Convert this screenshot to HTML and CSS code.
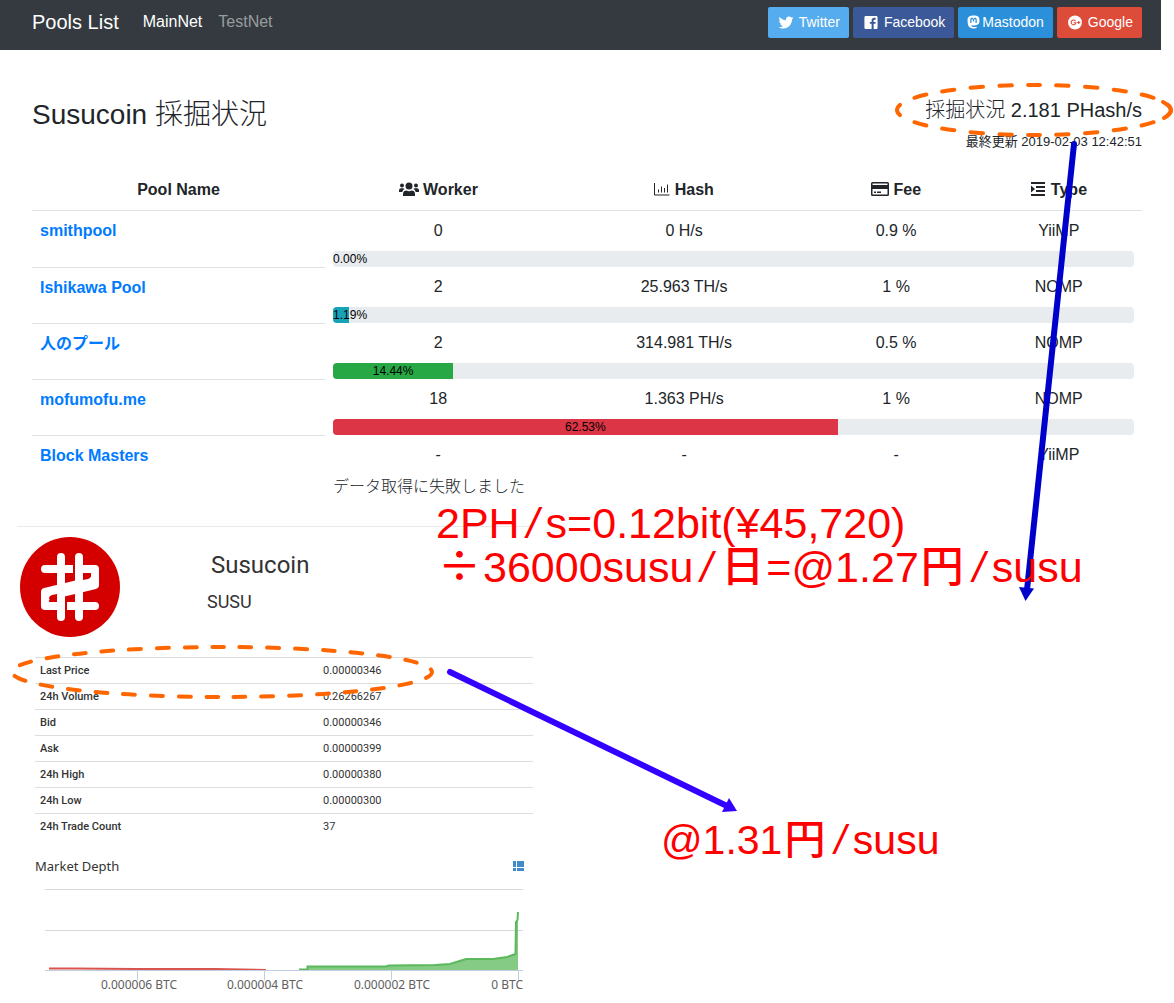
FILE: index.html
```html
<!DOCTYPE html>
<html lang="ja">
<head>
<meta charset="utf-8">
<title>Pools List</title>
<link rel="stylesheet" href="styles.css">
</head>
<body>
<div class="page">
  <header class="navbar">
    <a class="brand" href="#">Pools List</a>
    <nav class="links">
      <a class="link active" href="#">MainNet</a>
      <a class="link" href="#">TestNet</a>
    </nav>
    <div class="share">
      <button class="btn twitter" type="button"><svg class="icon wide" viewBox="0 0 512 512"><path d="M459.37 151.716c.325 4.548.325 9.097.325 13.645 0 138.72-105.583 298.558-298.558 298.558-59.452 0-114.68-17.219-161.137-47.106 8.447.974 16.568 1.299 25.34 1.299 49.055 0 94.213-16.568 130.274-44.832-46.132-.975-84.792-31.188-98.112-72.772 6.498.974 12.995 1.624 19.818 1.624 9.421 0 18.843-1.3 27.614-3.573-48.081-9.747-84.143-51.98-84.143-102.985v-1.299c13.969 7.797 30.214 12.67 47.431 13.319-28.264-18.843-46.781-51.005-46.781-87.391 0-19.492 5.197-37.36 14.294-52.954 51.655 63.675 129.3 105.258 216.365 109.807-1.624-7.797-2.599-15.918-2.599-24.04 0-57.828 46.782-104.934 104.934-104.934 30.213 0 57.502 12.67 76.67 33.137 23.715-4.548 46.456-13.32 66.599-25.34-7.798 24.366-24.366 44.833-46.132 57.827 21.117-2.273 41.584-8.122 60.426-16.243-14.292 20.791-32.161 39.308-52.628 54.253z"/></svg>Twitter</button>
      <button class="btn facebook" type="button"><svg class="icon wide" viewBox="-32 0 512 512"><path d="M448 80v352c0 26.5-21.5 48-48 48h-85.3V302.8h60.6l8.7-67.6h-69.3V192c0-19.6 5.4-32.9 33.5-32.9H384V98.7c-6.2-.8-27.4-2.7-52.2-2.7-51.6 0-87 31.5-87 89.4v49.9H184v67.6h60.9V480H48c-26.5 0-48-21.5-48-48V80c0-26.5 21.5-48 48-48h352c26.5 0 48 21.5 48 48z"/></svg>Facebook</button>
      <button class="btn mastodon" type="button"><svg class="icon" viewBox="0 0 24 26"><path fill-rule="evenodd" d="M12 1C6 1 1 3 1 9c0 9 1 16 11 16 3 0 5-1 6-1l-.2-2.200c-6 1.400-9.600.200-9.800-2.800 9 1.500 14.500-.500 15-6 .3-7 .5-12-11-12zM6 15V8.500c0-4.500 5-4.500 6-1 1-3.500 6-3.500 6 1V15h-2.300V9c0-2.300-2.600-2-2.600.300V12h-2.200V9.300c0-2.300-2.600-2.600-2.600-.3v6z"/></svg>Mastodon</button>
      <button class="btn google" type="button"><svg class="icon wide" viewBox="0 0 28 28"><circle cx="14" cy="14" r="13"/><path class="cut" d="M15 11.200A4.500 4.500 0 1 0 15.800 14.500H11.500M18 14h6M21 11v6"/></svg>Google</button>
    </div>
  </header>

  <main class="pools">
    <div class="summary">
      <h1 class="title">Susucoin 採掘状況</h1>
      <div class="status">
        <p class="rate">採掘状況 2.181 PHash/s</p>
        <p class="updated">最終更新 2019-02-03 12:42:51</p>
      </div>
    </div>

    <table class="pool-table">
      <colgroup><col class="c-name"><col class="c-worker"><col class="c-hash"><col class="c-fee"><col class="c-type"></colgroup>
      <thead>
        <tr>
          <th scope="col">Pool Name</th>
          <th scope="col"><svg class="th-icon users" viewBox="0 0 20 16"><circle cx="10" cy="5" r="3.500"/><path d="M4 15v-2c0-2.500 1.500-3.500 3.500-3.500 1.500 1 3.500 1 5 0 2 0 3.500 1 3.500 3.500v2z"/><circle cx="3" cy="4.500" r="2"/><circle cx="17" cy="4.500" r="2"/><path d="M0 11V9.500C0 8 1 7.300 2 7.300h2c.6 0 1.200.3 1.600.8C4.300 8.800 3.500 10 3.300 11zM20 11V9.500c0-1.500-1-2.200-2-2.200h-2c-.6 0-1.200.3-1.600.8 1.300.7 2.100 1.900 2.300 2.900z"/></svg> Worker</th>
          <th scope="col"><svg class="th-icon chart" viewBox="0 0 16 16"><path d="M.5 2v12h15M4.500 8.500v3M7.500 5.500v6M10.500 7v4.500M13.500 3.500v8"/></svg> Hash</th>
          <th scope="col"><svg class="th-icon card" viewBox="0 0 18 16"><path fill-rule="evenodd" d="M1.500 1h15A1.500 1.500 0 0 1 18 2.500v11a1.500 1.500 0 0 1-1.500 1.500h-15A1.500 1.500 0 0 1 0 13.500v-11A1.500 1.500 0 0 1 1.500 1zM1.500 2.500V4h15V2.500zM1.500 8v5.500h15V8zM3 10.500h2V12H3zM6 10.500h4V12H6z"/></svg> Fee</th>
          <th scope="col"><svg class="th-icon indent" viewBox="0 0 16 16"><path d="M1 1h14v2H1zM6 5h9v2H6zM6 9h9v2H6zM1 13h14v2H1zM1 4.500 5 8l-4 3.500z"/></svg> Type</th>
        </tr>
      </thead>
      <tbody>
        <tr><td class="name" rowspan="2"><a href="#">smithpool</a></td><td>0</td><td>0 H/s</td><td>0.9 %</td><td>YiiMP</td></tr>
        <tr><td class="meter" colspan="4"><div class="track"><div class="bar" style="width:0%">0.00%</div></div></td></tr>
        <tr><td class="name" rowspan="2"><a href="#">Ishikawa Pool</a></td><td>2</td><td>25.963 TH/s</td><td>1 %</td><td>NOMP</td></tr>
        <tr><td class="meter" colspan="4"><div class="track"><div class="bar teal" style="width:2%">1.19%</div></div></td></tr>
        <tr><td class="name" rowspan="2"><a href="#">人のプール</a></td><td>2</td><td>314.981 TH/s</td><td>0.5 %</td><td>NOMP</td></tr>
        <tr><td class="meter" colspan="4"><div class="track"><div class="bar green" style="width:15%">14.44%</div></div></td></tr>
        <tr><td class="name" rowspan="2"><a href="#">mofumofu.me</a></td><td>18</td><td>1.363 PH/s</td><td>1 %</td><td>NOMP</td></tr>
        <tr><td class="meter" colspan="4"><div class="track"><div class="bar red" style="width:63%">62.53%</div></div></td></tr>
        <tr><td class="name" rowspan="2"><a href="#">Block Masters</a></td><td>-</td><td>-</td><td>-</td><td>YiiMP</td></tr>
        <tr><td class="meter" colspan="4">データ取得に失敗しました</td></tr>
      </tbody>
    </table>
  </main>

  <section class="coin">
    <div class="coin-head">
      <svg class="logo" viewBox="0 0 100 100">
        <circle cx="50" cy="50" r="50" fill="#d40000"/>
        <g fill="none" stroke="#fff" stroke-width="8" stroke-linejoin="round">
          <path stroke-linecap="round" d="M41 20V80M59 20V80M25 32H44M56 69H75"/>
          <path d="M40 32H53M59 32H75V48L25 60V69H37M25 66V55L75 43"/>
          <path d="M47 69H60"/>
        </g>
        <path d="M63 36H68Q71 36 71 39 71 41 68 42L63 43zM37 64H33Q29 64 29 61 29 59 32 58L37 57z" fill="#d40000"/>
      </svg>
      <div class="coin-names">
        <h2 class="coin-name">Susucoin</h2>
        <p class="coin-code">SUSU</p>
      </div>
    </div>

    <div class="coin-body">
      <table class="ticker">
        <tr><th scope="row">Last Price</th><td>0.00000346</td></tr>
        <tr><th scope="row">24h Volume</th><td>0.26266267</td></tr>
        <tr><th scope="row">Bid</th><td>0.00000346</td></tr>
        <tr><th scope="row">Ask</th><td>0.00000399</td></tr>
        <tr><th scope="row">24h High</th><td>0.00000380</td></tr>
        <tr><th scope="row">24h Low</th><td>0.00000300</td></tr>
        <tr><th scope="row">24h Trade Count</th><td>37</td></tr>
      </table>

      <div class="depth-head">
        <h3 class="depth-title">Market Depth</h3>
        <svg class="grid-icon" viewBox="0 0 11 10"><path d="M0 0h3v6H0zM4 0h7v6H4zM0 7h3v3H0zM4 7h7v3H4z"/></svg>
      </div>
      <svg class="depth" viewBox="0 0 498 112">
        <path class="rule" d="M10 7.500H488M10 48.500H488"/>
        <path class="bids" d="M264 88V87.500L272.500 87V84.500H351L354 83.500 400 83 415 82 431 77H458L472 75 480.500 72 481 40 482.500 38 483 30V88z"/>
        <path class="bids-line" d="M264 87.500H272.500V84.500H351L354 83.500 400 83 415 82 431 77H458L472 75 480.500 72 481 40 482.500 38 483 30"/>
        <path class="asks" d="M14 86.500H40L100 87H180L231 88"/>
        <path class="axis" d="M10 88.500H488M102.500 88V98M229.500 88V98M356.500 88V98M483.500 88V98"/>
        <g class="labels">
          <text x="104" y="107">0.000006 BTC</text>
          <text x="230" y="107">0.000004 BTC</text>
          <text x="357" y="107">0.000002 BTC</text>
          <text class="last" x="488" y="107">0 BTC</text>
        </g>
      </svg>
    </div>
  </section>

  <svg class="marks" width="1174" height="1003" viewBox="0 0 1174 1003">
    <g class="ring">
      <ellipse cx="1034" cy="110" rx="137" ry="25" pathLength="560" stroke-dashoffset="6"/>
      <ellipse cx="222" cy="672" rx="210" ry="25" pathLength="868" stroke-dashoffset="3"/>
      <path class="tip" d="M1163 102Q1178 110 1164 118"/>
    </g>
    <path class="arrow-down" d="M1074 144 1027 590"/>
    <path class="head-down" d="M1019 587 1034 588.500 1025.500 601z"/>
    <path class="arrow-right" d="M450 672 727 806"/>
    <path class="head-right" d="M722 812 729 798 737 811z"/>
  </svg>
  <p class="note note-top">2PH<span class="sl">/</span>s=0.12bit(¥45,720)<br><span class="jp">÷</span>36000susu<span class="sl">/</span><span class="jp">日</span>=@1.27<span class="jp">円</span><span class="sl">/</span>susu</p>
  <p class="note note-bottom">@1.31<span class="jp">円</span><span class="sl">/</span>susu</p>
</div>
</body>
</html>
```
FILE: styles.css
```css
* { box-sizing: border-box; }

body {
  margin: 0;
  background: #fff;
  color: #212529;
  font: 16px/24px "Liberation Sans", "Noto Sans CJK JP", sans-serif;
}

h1, h2, h3, p { margin: 0; font-weight: 400; }
a { text-decoration: none; }

.page { position: relative; padding-right: 13px; }

/* Top bar */
.navbar {
  display: flex;
  align-items: center;
  height: 50px;
  padding: 0 19px 6px 32px;
  background: #343a40;
}
.brand { color: #fff; font-size: 20px; }
.links { display: flex; gap: 16px; margin-left: 24px; }
.link { color: #999c9f; }
.link.active { color: #fff; }
.share { display: flex; gap: 4px; margin-left: auto; }
.btn {
  display: flex;
  align-items: center;
  gap: 4px;
  height: 31px;
  padding: 0 9px;
  border: 0;
  border-radius: 2px;
  color: #fff;
  font: 14px/20px "Liberation Sans", sans-serif;
}
.icon { width: 13px; height: 14px; fill: #fff; }
.icon.wide { width: 18px; height: 15px; }
.mastodon { gap: 2px; }
.cut { fill: none; stroke: #dd4b39; stroke-width: 2; }
.twitter { background: #55acee; }
.facebook { background: #3b5998; }
.mastodon { background: #2b90d9; }
.google { background: #dd4b39; }

/* Pools */
.pools { padding: 48px 19px 27px 32px; }
.summary { display: flex; justify-content: space-between; margin-bottom: 18px; }
.title { font-size: 28px; line-height: 34px; font-weight: 300; }
.status { text-align: right; }
.rate { font-size: 20px; font-weight: 300; }
.updated { margin-top: 10px; font-size: 13px; line-height: 20px; }

.pool-table { width: 100%; table-layout: fixed; border-spacing: 0; text-align: center; font-weight: 300; }
.c-name { width: 26.4%; }
.c-worker { width: 20.4%; }
.c-hash { width: 23.9%; }
.c-fee { width: 14.3%; }
.c-type { width: 15%; }
.pool-table th { padding: 8px; border-bottom: 1px solid #dee2e6; font-weight: 700; }
.pool-table td { padding: 8px; vertical-align: top; }
.pool-table .name { padding: 8px; border-top: 1px solid #dee2e6; text-align: left; font-weight: 700; }
.pool-table tr:first-child .name { border-top: 0; }
.name a { color: #007bff; }
.pool-table .meter { padding: 0 8px; text-align: left; }
.track { display: flex; height: 16px; border-radius: 4px; background: #e9ecef; overflow: hidden; }
.bar { color: #000; font-size: 12px; line-height: 16px; text-align: center; white-space: nowrap; }
.teal { background: #17a2b8; }
.green { background: #28a745; }
.red { background: #dc3545; }

.th-icon { height: 16px; vertical-align: -2px; fill: #212529; }
.users { width: 20px; }
.chart { width: 16px; }
.chart path { fill: none; stroke: #212529; stroke-width: 1; }
.card { width: 18px; }
.indent { width: 16px; }

/* Coin panel */
.coin {
  width: 44%;
  min-width: 516px;
  max-width: 516px;
  margin-left: 17px;
  border-top: 1px solid #e7e9eb;
  color: #333;
  font-family: Roboto, sans-serif;
}
.coin-head { display: flex; gap: 87px; padding: 10px 0 0 3px; }
.logo { width: 100px; height: 100px; }
.coin-names { padding-top: 12px; }
.coin-name { padding-left: 4px; font-size: 24px; line-height: 32px; }
.coin-code { margin-top: 8px; font-size: 18px; line-height: 26px; }
.coin-body { padding: 20px 0 0 18px; }
.ticker { width: 100%; table-layout: fixed; border-spacing: 0; font-size: 11px; line-height: 15px; text-align: left; }
.ticker th, .ticker td { padding: 5px; border-top: 1px solid #ddd; font-weight: 400; }
.ticker th { width: 283px; font-weight: 500; }
.depth-head { display: flex; align-items: center; justify-content: space-between; padding: 17px 9px 6px 0; }
.depth-title { font: 13px/20px "Noto Sans", sans-serif; }
.grid-icon { width: 11px; height: 10px; fill: #428bca; }
.depth { display: block; width: 100%; }
.rule { fill: none; stroke: #d8d8d8; }
.axis { fill: none; stroke: #c0d0e0; }
.bids { fill: #5cb85c; fill-opacity: .75; }
.bids-line { fill: none; stroke: #5cb85c; stroke-width: 2; }
.asks { fill: none; stroke: #d9534f; stroke-width: 2; }
.labels { fill: #606060; font: 12px "Noto Sans", sans-serif; text-anchor: middle; }
.labels .last { text-anchor: end; }

/* Hand-drawn remarks laid over the page */
.marks { position: absolute; top: 0; left: 0; pointer-events: none; }
.ring { fill: none; stroke: #f60; stroke-width: 4; stroke-linecap: round; stroke-dasharray: 12 16; }
.tip { stroke-dasharray: none; }
.arrow-down { fill: none; stroke: #00c; stroke-width: 6; stroke-linecap: round; }
.head-down { fill: #00c; }
.arrow-right { fill: none; stroke: #30f; stroke-width: 6; stroke-linecap: round; }
.head-right { fill: #30f; }
.note { position: absolute; color: #f00; line-height: 44px; white-space: nowrap; }
.note-top { top: 501px; left: 436px; font-size: 43px; }
.note-bottom { top: 818px; left: 661px; font-size: 41px; }
.jp { padding: 0 2px; font-family: "Noto Sans CJK JP", sans-serif; font-weight: 500; line-height: 0; }
.sl { padding: 0 7px; font-style: italic; }
```
